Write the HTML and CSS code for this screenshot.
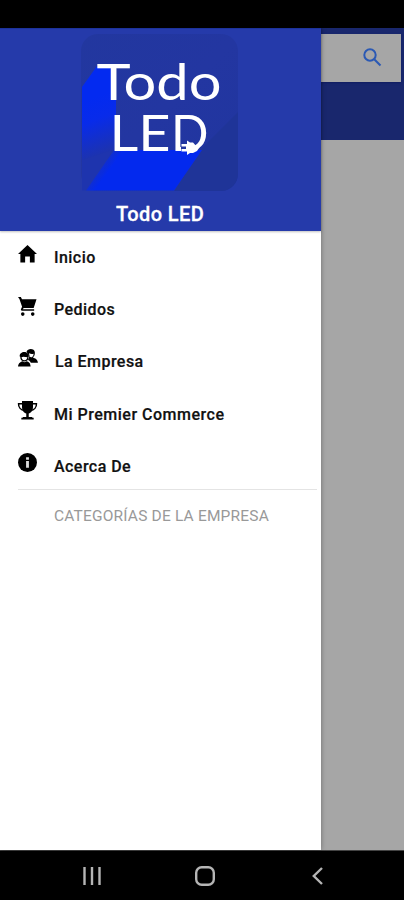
FILE: index.html
```html
<!DOCTYPE html>
<html lang="es">
<head>
<meta charset="utf-8">
<title>Todo LED</title>
<link rel="stylesheet" href="styles.css">
</head>
<body>
<div class="phone">
  <div class="status"></div>
  <div class="screen">
    <aside class="drawer">
      <header class="brand">
        <svg class="logo" width="159" height="158" viewBox="81 34 159 158">
          <defs>
            <linearGradient id="tile" x1="0" y1="0" x2="1" y2="1">
              <stop offset="0" stop-color="#22379f"/><stop offset=".5" stop-color="#2336a1"/><stop offset="1" stop-color="#20359f"/>
            </linearGradient>
            <linearGradient id="upper" x1="88" y1="100" x2="110" y2="156" gradientUnits="userSpaceOnUse">
              <stop offset="0" stop-color="#032af0"/><stop offset=".35" stop-color="#082bea"/><stop offset="1" stop-color="#2034a6"/>
            </linearGradient>
            <linearGradient id="beam" x1="94" y1="162" x2="108" y2="172" gradientUnits="userSpaceOnUse">
              <stop offset="0" stop-color="#0329ee" stop-opacity="0"/><stop offset="1" stop-color="#0329ee"/>
            </linearGradient>
            <clipPath id="round"><rect x="81" y="34" width="157" height="157" rx="17"/></clipPath>
            <clipPath id="cord"><path d="M170 108H215V154H194V145H181V154H170Z"/></clipPath>
          </defs>
          <g clip-path="url(#round)">
            <rect x="81" y="34" width="159" height="158" fill="url(#tile)"/>
            <path d="M200 150L240 110V192H174Z" fill="#1f3498"/>
            <path d="M82 87L97 66H116V150L100 192H82Z" fill="url(#upper)"/>
          </g>
          <path d="M82 160V190.500H95L112 150Z" fill="#1e34ae"/>
          <path d="M86 190.500L114 150H202L174 190.500Z" fill="url(#beam)"/>
          <g class="lettering">
            <text x="96.500" y="99.500" textLength="125" lengthAdjust="spacingAndGlyphs">Todo</text>
            <text x="109.500" y="151" textLength="61" lengthAdjust="spacingAndGlyphs">LE</text>
            <text x="171" y="151" textLength="37.500" lengthAdjust="spacingAndGlyphs" clip-path="url(#cord)">D</text>
          </g>
          <path d="M187 140.500L190 142.500H193L197 147L201 145L197 151L193 153H190L187 155V151.500H181.500V149H186V146.500H181.500V144H187Z" fill="#fff"/>
        </svg>
        <h1>Todo LED</h1>
      </header>
      <nav>
        <a class="item"><svg class="icon" viewBox="0 0 20 20"><path d="M10 0L20 9.500H17.500V18.500H12.500V12H7.500V18.500H2.500V9.500H0Z"/></svg><span>Inicio</span></a>
        <a class="item"><svg class="icon" viewBox="0 0 20 20"><path d="M0 0H3L4.200 2.400H19.500L16.500 11.500H6L5 13H17V14.500H4.500C3 14.500 2.700 13.500 3.300 12.400L4.300 10.300L1.500 2Z"/><circle cx="5" cy="18" r="1.900"/><circle cx="15.500" cy="18" r="1.900"/></svg><span>Pedidos</span></a>
        <a class="item people"><svg class="icon" viewBox="0 0 20 20"><path d="M9 3C10 -.3 14 -.8 16.300 .8C18.300 2.300 18 5.500 17 7.300L15.500 9C18 10 20.500 10.500 21 14.500H13.500C12.500 12.500 11.500 12 10.500 11.600L12 8Z"/><path d="M11.500 4.500C13.500 5.500 15 5.500 16.500 5C16 9 13.500 9.500 12.300 8Z" fill="#fff"/><path d="M1.800 8C1.200 1.500 11.900 1.500 11.500 8L10 8.800C7.500 8.500 5.500 7.500 3.500 8.800Z"/><path d="M3 8C3 14 10.500 14 10.500 8" fill="none" stroke="#000" stroke-width="1.300"/><path d="M0 18.500C.4 14 3 13.700 4.800 12.800L7 14L9 12.800C11.300 13.700 13 14 13.300 18.500Z"/></svg><span>La Empresa</span></a>
        <a class="item"><svg class="icon" viewBox="0 0 20 20"><path d="M4.200 0H15.800V6C15.800 10.500 13.500 12.500 11.300 13.200V16.800H15V17.500H16.500V19.500H3.500V17.500H5V16.800H8.700V13.200C6.500 12.500 4.200 10.500 4.200 6Z"/><path d="M5 2.800H.6C.3 6.700 3 9.500 7 10M15 2.800H19.400C19.700 6.700 17 9.500 13 10" fill="none" stroke="#000" stroke-width="1.600"/></svg><span class="wide">Mi Premier Commerce</span></a>
        <a class="item"><svg class="icon" viewBox="0 0 20 20"><circle cx="10" cy="10" r="10"/><path d="M8.500 4.500H11.500V7H8.500ZM8.500 8.500H11.500V15.500H8.500Z" fill="#ddd"/></svg><span>Acerca De</span></a>
      </nav>
      <h2>CATEGORÍAS DE LA EMPRESA</h2>
    </aside>
    <main class="behind">
      <div class="appbar"><div class="search"><svg width="19" height="19" viewBox="0 0 19 19"><circle cx="7" cy="7" r="5.700"/><path d="M11.200 11.200L17.500 17.500"/></svg></div></div>
    </main>
  </div>
  <footer class="navbar">
    <svg width="18" height="18" viewBox="0 0 18 18"><path d="M1.500 0V18M9 0V18M16.500 0V18"/></svg>
    <svg width="20" height="20" viewBox="0 0 20 20"><rect x="1.200" y="1.200" width="17.600" height="17.600" rx="5.500"/></svg>
    <svg width="11" height="18" viewBox="0 0 11 18"><path d="M10 1L1.800 9L10 17"/></svg>
  </footer>
</div>
</body>
</html>
```
FILE: styles.css
```css
* { box-sizing: border-box; }
body { margin: 0; font-family: Roboto, "Liberation Sans", sans-serif; }
.phone { width: 404px; height: 900px; display: flex; flex-direction: column; background: #000; overflow: hidden; }
.status { height: 28px; flex: none; }
.screen { height: 823px; display: flex; border-bottom: 1px solid #444; }
.drawer { width: 320.500px; flex: none; background: #fff; box-shadow: 0 0 5px rgba(0,0,0,.35); z-index: 1; }
.brand { height: 203px; padding: 6px 0 0 81px; background: #253aaa; box-shadow: 0 1px 2px rgba(0,0,0,.25); border-top: 1px solid #1c329c; }
.logo { display: block; margin-top: -1px; }
.lettering { font-family: Lato, sans-serif; font-size: 51px; fill: #fff; }
h1 { margin: 10px 0 0 35px; font-size: 20px; line-height: 24px; font-weight: 500; color: #fff; letter-spacing: .4px; -webkit-text-stroke: .3px #fff; }
nav { margin-left: 18px; margin-right: 4px; border-bottom: 1px solid #e4e4e4; height: 259px; }
.item { height: 52.200px; display: flex; align-items: center; gap: 17px; font-size: 16px; font-weight: 500; color: #111; letter-spacing: .45px; }
.item span { padding-top: 1px; -webkit-text-stroke: .2px #111; }
.item .wide { letter-spacing: .5px; }
.icon { width: 19px; height: 19px; overflow: visible; position: relative; top: -3px; }
.people { gap: 18px; }
h2 { margin: 16px 0 0 54px; font-size: 15.500px; line-height: 20px; font-weight: 400; color: #999; white-space: nowrap; letter-spacing: .18px; }
.behind { flex: 1; background: #a6a6a6; }
.appbar { height: 112px; padding: 6px 3px 0 0; background: #19276d; }
.search { height: 48px; background: #a6a6a6; display: flex; align-items: center; justify-content: flex-end; padding: 0 19px 2px 0; box-shadow: 0 1px 2px #101c60; }
.search svg { fill: none; stroke: #2b59b4; stroke-width: 2; }
.navbar { flex: 1; display: grid; grid-template-columns: 113px 113px 113px; padding-left: 35px; place-items: center; }
.navbar svg { fill: none; stroke: #b5b5b5; stroke-width: 2.400; }
```
